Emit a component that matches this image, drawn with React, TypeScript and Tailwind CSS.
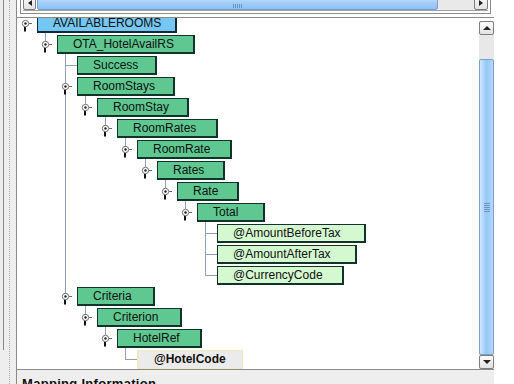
import React from "react";

type TreeNode = {
  label: string;
  depth: number;
  w: number;
  kind: "root" | "el" | "attr" | "sel";
  open?: boolean;
};

const ROW = 21;

const nodes: TreeNode[] = [
  { label: "AVAILABLEROOMS", depth: 0, w: 140, kind: "root", open: true },
  { label: "OTA_HotelAvailRS", depth: 1, w: 138, kind: "el", open: true },
  { label: "Success", depth: 2, w: 80, kind: "el" },
  { label: "RoomStays", depth: 2, w: 98, kind: "el", open: true },
  { label: "RoomStay", depth: 3, w: 92, kind: "el", open: true },
  { label: "RoomRates", depth: 4, w: 101, kind: "el", open: true },
  { label: "RoomRate", depth: 5, w: 95, kind: "el", open: true },
  { label: "Rates", depth: 6, w: 68, kind: "el", open: true },
  { label: "Rate", depth: 7, w: 62, kind: "el", open: true },
  { label: "Total", depth: 8, w: 68, kind: "el", open: true },
  { label: "@AmountBeforeTax", depth: 9, w: 149, kind: "attr" },
  { label: "@AmountAfterTax", depth: 9, w: 140, kind: "attr" },
  { label: "@CurrencyCode", depth: 9, w: 127, kind: "attr" },
  { label: "Criteria", depth: 2, w: 78, kind: "el", open: true },
  { label: "Criterion", depth: 3, w: 85, kind: "el", open: true },
  { label: "HotelRef", depth: 4, w: 85, kind: "el", open: true },
  { label: "@HotelCode", depth: 5, w: 106, kind: "sel" },
];

const boxClass = {
  root: "bg-[#74c8f3] border-[#14283a] border-t border-l border-r-2 border-b-2 font-normal",
  el: "bg-[#5ec890] border-[#12332a] border-t border-l border-r-2 border-b-2 font-normal",
  attr: "bg-[#d4f9d0] border-[#12332a] border-t border-l border-r-2 border-b-2 font-normal",
  sel: "bg-[#ebebeb] border-[#efeabf] border border-l-2 font-bold",
};

function lastChild(i: number) {
  let last = -1;
  for (let j = i + 1; j < nodes.length; j++) {
    if (nodes[j].depth <= nodes[i].depth) break;
    if (nodes[j].depth === nodes[i].depth + 1) last = j;
  }
  return last;
}

function Connectors() {
  const els: React.ReactNode[] = [];
  nodes.forEach((n, i) => {
    const bx = 20 + n.depth * 20;
    const cy = i * ROW + 9.5;
    const col = 8 + n.depth * 20;
    if (n.open) {
      const lc = lastChild(i);
      if (lc > 0) {
        els.push(
          <line key={`v${i}`} x1={bx + 8.5} y1={i * ROW + 19} x2={bx + 8.5} y2={lc * ROW + 10} stroke="#8ea3bb" />
        );
      }
      els.push(
        <g key={`i${i}`}>
          <rect x={col - 1} y={cy + 3} width={2} height={5} fill="#111" />
          <circle cx={col + 0.5} cy={cy} r={3.2} fill="#fff" stroke="#6e6e6e" />
          <circle cx={col + 0.5} cy={cy} r={1.2} fill="#222" />
          <line x1={col + 4} y1={cy} x2={col + 7} y2={cy} stroke="#666" />
        </g>
      );
    } else {
      els.push(
        <line key={`h${i}`} x1={col} y1={cy} x2={bx} y2={cy} stroke="#8ea3bb" />
      );
    }
  });
  return (
    <svg className="pointer-events-none absolute left-0 top-0" width={460} height={nodes.length * ROW}>
      {els}
    </svg>
  );
}

function ArrowButton({ dir, className }: { dir: "left" | "right" | "up" | "down"; className: string }) {
  const tri = {
    left: "border-y-[3px] border-y-transparent border-r-[4px] border-r-[#222]",
    right: "border-y-[3px] border-y-transparent border-l-[4px] border-l-[#222]",
    up: "border-x-[4px] border-x-transparent border-b-[4px] border-b-[#222]",
    down: "border-x-[4px] border-x-transparent border-t-[4px] border-t-[#222]",
  }[dir];
  return (
    <div
      className={`flex shrink-0 items-center justify-center rounded-[2px] border border-[#7d7d7d] bg-gradient-to-b from-[#fdfdfd] to-[#e2e2e2] ${className}`}
    >
      <div className={`h-0 w-0 ${tri}`} />
    </div>
  );
}

export default function App() {
  return (
    <div className="flex h-[384px] w-[514px] overflow-hidden bg-white font-['Liberation_Sans',Arial,sans-serif] text-[#111]">
      {/* left splitter strip */}
      <div className="flex h-full w-[16px] shrink-0 bg-[#eeeeee]">
        <div className="ml-[3px] h-[350px] w-px bg-[#8a8a8a]" />
        <div className="ml-[5px] h-full w-0 border-l border-dotted border-[#a8a8a8]" />
      </div>

      {/* main column */}
      <div className="flex h-full w-[478px] shrink-0 flex-col">
        {/* horizontal scrollbar */}
        <div className="h-[17px] shrink-0 border-l border-[#8a8a8a] pl-[3px] pr-[3px]">
          <div className="h-[14px] border-x border-b border-[#8c8c8c] px-[2px]">
            <div className="flex h-[11px] items-end overflow-hidden border-b border-[#a0a0a0]">
              <ArrowButton dir="left" className="h-[15px] w-[13px]" />
              <div className="ml-[1px] flex h-[15px] w-[401px] items-center justify-center rounded-[2px] border border-[#7a9fcf] bg-gradient-to-b from-[#cfe6fd] via-[#a4cff7] to-[#8dc1f4]">
                <div className="mt-[6px] flex gap-[1px]">
                  <div className="h-[4px] w-px bg-[#6d94c4]" />
                  <div className="h-[4px] w-px bg-[#6d94c4]" />
                  <div className="h-[4px] w-px bg-[#6d94c4]" />
                  <div className="h-[4px] w-px bg-[#6d94c4]" />
                  <div className="h-[4px] w-px bg-[#6d94c4]" />
                </div>
              </div>
              <div className="h-[15px] flex-1 bg-[#e9e9e9]" />
              <ArrowButton dir="right" className="h-[15px] w-[14px]" />
            </div>
          </div>
        </div>

        {/* tree panel */}
        <div className="flex h-[353px] shrink-0 border-y border-l border-[#8a8a8a]">
          <div className="relative flex-1 overflow-hidden">
            <div className="relative mt-[-4px] text-[12px] leading-[16px]">
              {nodes.map((n) => (
                <div key={n.label} className="flex h-[21px] items-start">
                  <div
                    style={{ marginLeft: 20 + n.depth * 20, width: n.w }}
                    className={`h-[19px] shrink-0 whitespace-nowrap pl-[15px] ${boxClass[n.kind]}`}
                  >
                    {n.label}
                  </div>
                </div>
              ))}
              <Connectors />
            </div>
          </div>

          {/* vertical scrollbar */}
          <div className="flex w-[15px] shrink-0 flex-col bg-[#e8e8e8]">
            <div className="h-[3px] shrink-0 bg-white" />
            <ArrowButton dir="up" className="h-[14px] w-[15px]" />
            <div className="h-[24px] shrink-0" />
            <div className="flex flex-1 items-center justify-center rounded-[2px] border border-[#7a9fcf] bg-gradient-to-r from-[#cfe6fd] via-[#94c6f6] to-[#b5d8fa]">
              <div className="flex flex-col gap-[1px]">
                <div className="h-px w-[6px] bg-[#6d94c4]" />
                <div className="h-px w-[6px] bg-[#6d94c4]" />
                <div className="h-px w-[6px] bg-[#6d94c4]" />
                <div className="h-px w-[6px] bg-[#6d94c4]" />
                <div className="h-px w-[6px] bg-[#6d94c4]" />
              </div>
            </div>
            <ArrowButton dir="down" className="h-[14px] w-[15px]" />
          </div>
        </div>

        {/* mapping information header */}
        <div className="min-h-0 flex-1 overflow-hidden border-l border-[#8a8a8a] bg-[#eeeeee] pl-[5px] pt-[6px]">
          <div className="text-[13px] font-bold leading-[15px] tracking-[0.3px]">Mapping Information</div>
        </div>
      </div>

      <div className="h-full flex-1 bg-white" />
    </div>
  );
}
